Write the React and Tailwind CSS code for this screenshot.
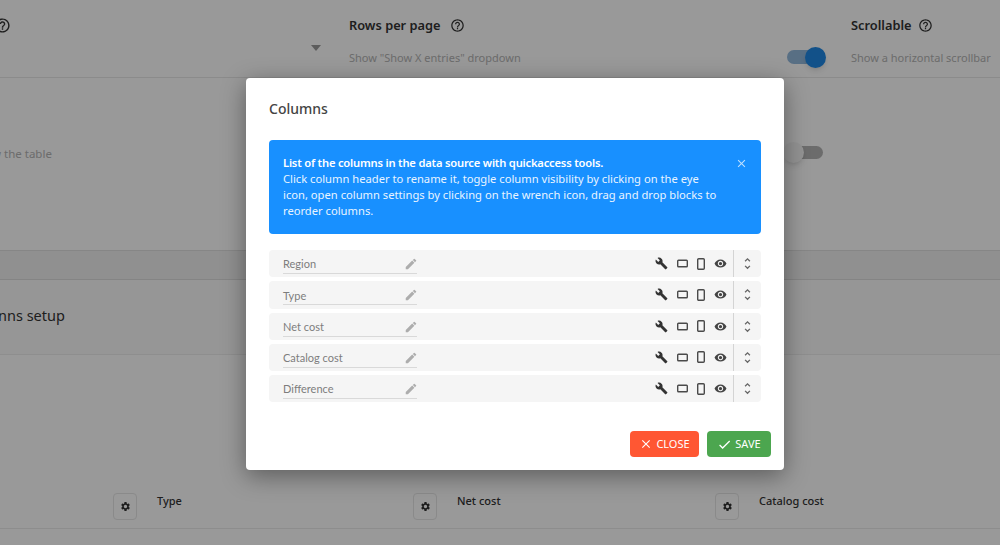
import React from 'react';
import { MdBuild, MdCheck, MdClose, MdEdit, MdHelpOutline, MdRemoveRedEye, MdSettings, MdUnfoldMore } from 'react-icons/md';

const columns = ['Region', 'Type', 'Net cost', 'Catalog cost', 'Difference'];
const bottomColumns = ['Type', 'Net cost', 'Catalog cost'];

const ColumnRow = ({ name }) => (
  <div className="flex h-[27.25px] items-center rounded-sm bg-[#f5f5f5] pl-[14px]">
    <div className="relative flex h-[21px] w-[134px] items-center border-b border-[#d9d9d9] pt-[3px] font-['Lato',sans-serif] text-[11px] text-[#7d7d7d]">
      {name}
      <MdEdit className="absolute right-[-1px] top-[4px] text-[14px] text-[#adadad]" />
    </div>
    <div className="ml-auto flex items-center text-[#4a4a4a]">
      <MdBuild className="mr-[9px] text-[13px] text-[#333]" />
      <svg className="mr-[9px]" width="11" height="9" viewBox="0 0 11 9" fill="none" stroke="#4a4a4a" strokeWidth="1.4">
        <rect x="0.7" y="1.2" width="9.6" height="6.6" rx="0.8" />
      </svg>
      <svg className="mr-[9px]" width="8" height="12" viewBox="0 0 8 12" fill="none" stroke="#4a4a4a" strokeWidth="1.4">
        <rect x="0.7" y="0.7" width="6.6" height="10.6" rx="1" />
      </svg>
      <MdRemoveRedEye className="text-[13px] text-[#444]" />
    </div>
    <div className="ml-[6px] flex h-full w-[28px] items-center justify-center border-l border-[#d4d4d4]">
      <MdUnfoldMore className="text-[15px] text-[#666]" />
    </div>
  </div>
);

const App = () => {
  return (
    <div className="relative h-[545px] w-[1000px] overflow-hidden bg-white font-['Noto_Sans','Open_Sans',sans-serif]">
      {/* Pagina detras del modal */}
      <div className="flex h-[78px] border-b border-[#e8e8e8] pt-[16px]">
        <div className="w-[349px] shrink-0">
          <MdHelpOutline className="ml-[-6px] mt-[1px] text-[17px] text-[#333]" />
        </div>
        <div className="relative w-[502px] shrink-0">
          <div className="flex items-center gap-[9px] text-[12.8px] font-semibold text-[#333]">
            Rows per page
            <MdHelpOutline className="text-[15px]" />
          </div>
          <p className="mt-[15px] text-[11px] text-[#b4b4b4]">Show "Show X entries" dropdown</p>
          <div className="absolute left-[-38px] top-[29px] h-0 w-0 border-x-[5px] border-t-[6px] border-x-transparent border-t-[#999]" />
          <div className="absolute left-[438px] top-[34px] h-[14px] w-[36px] rounded-full bg-[#93b9dd]" />
          <div className="absolute left-[456px] top-[31px] h-[21px] w-[21px] rounded-full bg-[#1e88e5] shadow-md" />
        </div>
        <div className="flex-1">
          <div className="flex items-center gap-[6px] text-[12.8px] font-semibold text-[#333]">
            Scrollable
            <MdHelpOutline className="text-[15px]" />
          </div>
          <p className="mt-[15px] text-[11px] whitespace-nowrap text-[#b4b4b4]">Show a horizontal scrollbar</p>
        </div>
      </div>

      <div className="relative h-[173px] border-b border-[#e0e0e0]">
        <p className="absolute left-[-8px] top-[67px] text-[11.5px] text-[#b4b4b4]">w the table</p>
        <div className="absolute left-[790px] top-[68px] h-[13px] w-[33px] rounded-full bg-[#b5b5b5]" />
        <div className="absolute left-[783px] top-[64px] h-[21px] w-[21px] rounded-full bg-[#f5f5f5] shadow-md" />
      </div>

      <div className="h-[29px] border-b border-[#dcdcdc] bg-[#f1f1f1]" />

      <div className="flex h-[75px] items-center overflow-hidden border-b border-[#ededed] bg-[#fafafa] pb-[3px] text-[14.5px] text-[#333]">
        <span className="ml-[-2px]">nns setup</span>
      </div>

      <div className="grid h-[174px] grid-cols-[300px_302px_1fr] items-start border-b border-[#ececec] pl-[113px] pt-[138px]">
        {bottomColumns.map((name) => (
          <div key={name} className="flex gap-[20px]">
            <div className="flex h-[27px] w-[24px] items-center justify-center rounded-sm border border-[#e6e6e6] text-[#333]">
              <MdSettings className="text-[11px]" />
            </div>
            <span className="text-[11px] font-medium text-[#333]">{name}</span>
          </div>
        ))}
      </div>

      <div className="absolute inset-0 bg-black/40" />

      {/* Modal de columnas */}
      <div className="absolute left-[246px] top-[78px] flex h-[392px] w-[538px] flex-col rounded-sm bg-white shadow-[0_6px_24px_rgba(0,0,0,0.4)]">
        <h2 className="pl-[23px] pt-[21px] text-[14px] leading-[20px] font-medium text-[#444]">Columns</h2>

        <div className="relative mx-[23px] mt-[21px] h-[94px] rounded-sm bg-[#1890ff] pl-[14px] pt-[15px] pr-[40px] text-[11.2px] leading-[16px] text-[#e8f4ff]">
          <p className="font-semibold tracking-[-0.2px] text-white">List of the columns in the data source with quickaccess tools.</p>
          <p>
            Click column header to rename it, toggle column visibility by clicking on the eye icon, open column settings by clicking on the wrench icon, drag and drop blocks to reorder columns.
          </p>
          <MdClose className="absolute right-[13px] top-[17px] text-[13px] text-[#bfe0ff]" />
        </div>

        <div className="mx-[23px] mt-[16px] flex flex-col gap-[4px]">
          {columns.map((name) => (
            <ColumnRow key={name} name={name} />
          ))}
        </div>

        <div className="mt-auto mb-[13px] mr-[13px] flex justify-end gap-[8px] text-[11px]">
          <button className="flex h-[26px] w-[69px] items-center justify-center gap-[3px] rounded-sm bg-[#ff5733] text-[#fff]">
            <MdClose className="text-[14px]" /> CLOSE
          </button>
          <button className="flex h-[26px] w-[64px] items-center justify-center gap-[3px] rounded-sm bg-[#4ca64f] text-[#fff]">
            <MdCheck className="text-[15px]" /> SAVE
          </button>
        </div>
      </div>
    </div>
  );
};

export default App;
